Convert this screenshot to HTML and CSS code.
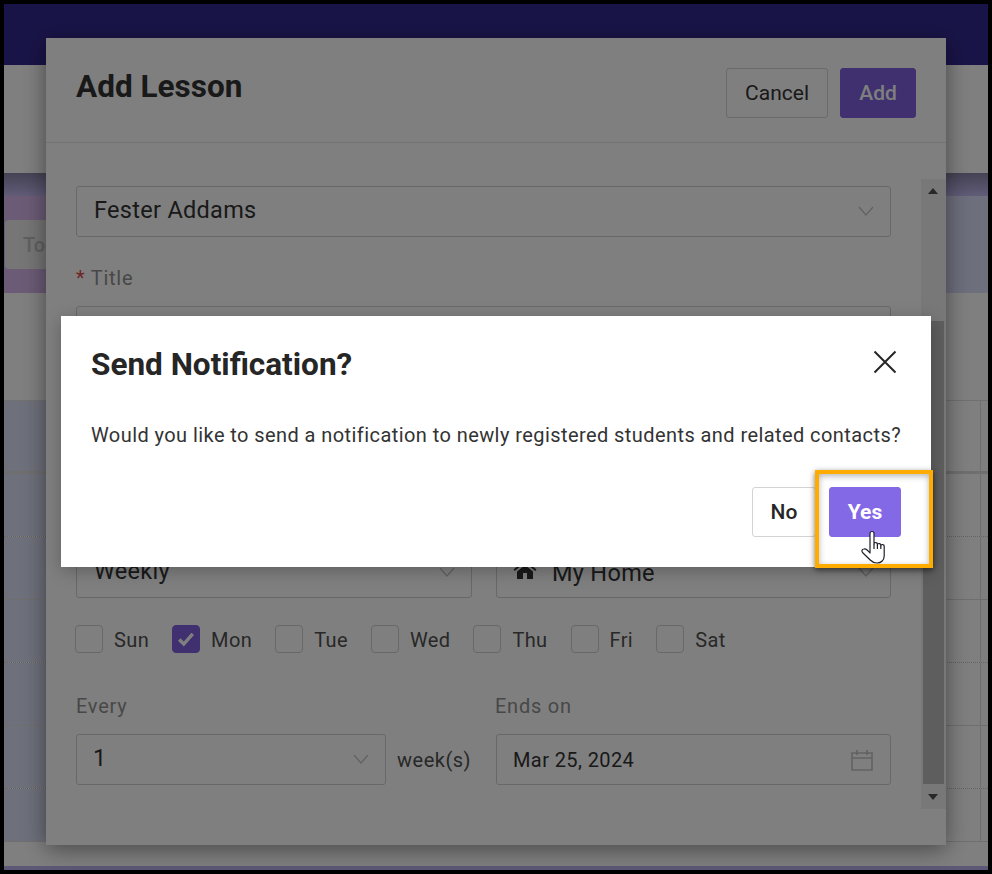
FILE: index.html
```html
<!DOCTYPE html>
<html lang="en">
<head>
<meta charset="utf-8">
<title>Send Notification?</title>
<link rel="stylesheet" href="styles.css">
</head>
<body>
<div class="frame">
  <div class="page">
    <div class="app-header"></div>
    <div class="app-toolbar"></div>
    <div class="band"></div>
    <div class="strip">
      <div class="strip-left"><button class="today">Today</button></div>
    </div>
    <div class="app-gap"></div>
    <div class="cal">
      <div class="cal-row head"><i class="side"></i><i class="main"></i><i class="last"></i></div>
      <div class="cal-row dot"><i class="side"></i><i class="main"></i><i class="last"></i></div>
      <div class="cal-row"><i class="side"></i><i class="main"></i><i class="last"></i></div>
      <div class="cal-row dot"><i class="side"></i><i class="main"></i><i class="last"></i></div>
      <div class="cal-row"><i class="side"></i><i class="main"></i><i class="last"></i></div>
      <div class="cal-row dot"><i class="side"></i><i class="main"></i><i class="last"></i></div>
      <div class="cal-row short"><i class="side"></i><i class="main"></i><i class="last"></i></div>
    </div>
    <div class="app-foot"></div>
    <div class="app-foot-bar"></div>

    <section class="modal">
      <header class="modal-head">
        <h2>Add Lesson</h2>
        <div class="modal-actions">
          <button class="btn">Cancel</button>
          <button class="btn primary">Add</button>
        </div>
      </header>
      <div class="modal-body">
        <div class="field select"><span class="value big raised">Fester Addams</span><svg class="chev" viewBox="0 0 16 10"><path d="M1 1l7 8 7-8"/></svg></div>
        <label class="label first"><span class="req">*</span> Title</label>
        <div class="field"></div>
        <div class="two covered">
          <div class="field select"><span class="value big raised">Weekly</span><svg class="chev" viewBox="0 0 16 10"><path d="M1 1l7 8 7-8"/></svg></div>
          <div class="field select"><svg class="home" viewBox="0 0 24 20"><path d="M12 1L0.5 10.5l1.3 1.5L12 3.6 22.2 12l1.3-1.5-4.3-3.6V2h-3v2.4zM4 12.6V20h6v-6h4v6h6v-7.4L12 6z"/></svg><span class="value big">My Home</span><svg class="chev" viewBox="0 0 16 10"><path d="M1 1l7 8 7-8"/></svg></div>
        </div>
        <div class="days">
          <label class="day"><span class="box"></span>Sun</label>
          <label class="day"><span class="box on"><svg viewBox="0 0 16 14"><path d="M2 7.5l4 4 8-9"/></svg></span>Mon</label>
          <label class="day"><span class="box"></span>Tue</label>
          <label class="day"><span class="box"></span>Wed</label>
          <label class="day"><span class="box"></span>Thu</label>
          <label class="day"><span class="box"></span>Fri</label>
          <label class="day"><span class="box"></span>Sat</label>
        </div>
        <div class="two repeat">
          <div>
            <label class="label">Every</label>
            <div class="every">
              <div class="field select"><span class="value big raised one">1</span><svg class="chev" viewBox="0 0 16 10"><path d="M1 1l7 8 7-8"/></svg></div>
              <span class="unit">week(s)</span>
            </div>
          </div>
          <div>
            <label class="label ends">Ends on</label>
            <div class="field select"><span class="value">Mar 25, 2024</span>
              <svg class="cal-icon" viewBox="0 0 24 24"><path d="M2 5h20v17H2zM2 10h20M7 2v5M17 2v5"/></svg>
            </div>
          </div>
        </div>
      </div>
      <div class="scrollbar">
        <span class="arrow up"></span>
        <span class="thumb"></span>
        <span class="arrow down"></span>
      </div>
    </section>

    <div class="mask"></div>

    <section class="dialog">
      <div class="dialog-head">
        <h2>Send Notification?</h2>
        <svg class="close" viewBox="0 0 24 24"><path d="M1.5 1.5l21 21M22.5 1.5l-21 21"/></svg>
      </div>
      <p>Would you like to send a notification to newly registered students and related contacts?</p>
      <div class="dialog-actions">
        <button class="btn no">No</button>
        <button class="btn yes">Yes</button>
      </div>
      <div class="callout"></div>
      <svg class="cursor" viewBox="0 0 28 34"><path class="hand" d="M10 23V3.5a2 2 0 0 1 4 0V14a1.7 1.7 0 0 1 3.4.5V15a1.7 1.7 0 0 1 3.4.5v.5a1.7 1.7 0 0 1 3.4.5V26c0 4-3 7-7 7-3 0-5-1-7-3L3 23c-2-2-1-4 1-4 2-.5 4 1.500 6 4z"/><path class="hand" d="M14 14v5M17.400 15v4M20.800 16v3"/></svg>
    </section>
  </div>
</div>
</body>
</html>
```
FILE: styles.css
```css
* { box-sizing: border-box; }
html, body { margin: 0; padding: 0; background: #000; }
body { font-family: Roboto, "Liberation Sans", sans-serif; color: #333; }
.frame { width: 992px; height: 874px; padding: 4px; background: #000; overflow: hidden; }
.page { position: relative; width: 984px; height: 866px; background: #fff; overflow: hidden; }

.app-header { height: 61px; background: #332990; }
.app-toolbar { height: 108px; background: #fff; }
.band { height: 23px; background: linear-gradient(#8a86a8, #c2b8f0); }
.strip { height: 97px; background: linear-gradient(90deg, #d9b7ec 0, #c6bbf0 45%, #dde0fb 100%); display: flex; }
.strip-left { padding: 24px 0 0 1px; }
.today { height: 49px; width: 120px; padding: 0 0 0 18px; text-align: left; border: 0; border-radius: 4px; background: #ececec; color: #c0c0c0; font: 500 20px Roboto, sans-serif; }
.app-gap { height: 107px; background: #fff; }

.cal { border-top: 1px solid #e0e0e0; }
.cal-row { height: 63px; display: grid; grid-template-columns: 42px 1fr 34px 1px 7px; border-bottom: 1px solid #dedede; }
.cal-row.head { height: 73px; border-bottom-width: 3px; }
.cal-row.dot { border-bottom: 1px dotted #c8c8c8; }
.cal-row.short { height: 53px; }
.side { background: #dce1f7; grid-column: 1; }
.main { grid-column: 2 / 3; }
.last { grid-column: 4; background: #dedede; }
.app-foot { height: 24px; background: #fff; }
.app-foot-bar { height: 5px; background: #b9b0ea; }

.modal { position: absolute; left: 42px; top: 34px; width: 900px; height: 807px; background: #fff; box-shadow: 0 4px 22px rgba(0,0,0,.45); }
.modal-head { height: 105px; display: flex; justify-content: space-between; align-items: flex-start; padding: 30px 30px 0; border-bottom: 1px solid #e6e6e6; }
.modal-head h2 { margin: 1px 0 0; font-size: 31.500px; line-height: 36px; font-weight: 700; color: #333; }
.modal-actions { display: flex; gap: 12px; }
.btn { height: 50px; padding: 0 18px; border: 1px solid #d4d4d4; border-radius: 3px; background: #fff; color: #333; font: 400 21px Roboto, sans-serif; }
.btn.primary { width: 76px; background: #8060de; border-color: #8060de; color: #fff; font-weight: 500; }
.modal-body { padding: 43px 55px 0 30px; }
.field { height: 51px; border: 1px solid #d0d0d0; border-radius: 3px; display: flex; align-items: center; padding: 0 16px; position: relative; background: #fff; }
.value { font-size: 20px; letter-spacing: .4px; color: #333; }
.value.big { font-size: 23.500px; letter-spacing: .3px; }
.value.raised { margin-bottom: 4px; margin-left: 1px; }
.value.one { margin-left: 0; }
.chev { position: absolute; right: 16px; top: 19px; width: 16px; height: 10px; fill: none; stroke: #c4c4c4; stroke-width: 1.300; }
.label { display: block; height: 25px; line-height: 25px; margin-bottom: 16px; font-size: 20px; letter-spacing: .75px; color: #909090; }
.label.first { margin-top: 29px; margin-bottom: 15px; }
.label.ends { margin-left: -1px; }
.req { color: #e04a4a; }
.two { display: grid; grid-template-columns: 396px 395px; column-gap: 24px; }
.covered { margin-top: 190px; }
.home { width: 24px; height: 20px; margin-right: 15px; fill: #333; margin-top: -8px; }
.days { display: flex; gap: 23px; margin: 27px 0 0 -1px; }
.day { display: flex; align-items: center; gap: 11px; height: 28px; padding-top: 2px; font-size: 20px; letter-spacing: .38px; color: #505050; }
.box { width: 28px; height: 28px; margin-top: -2px; border: 1px solid #d0d0d0; border-radius: 4px; display: flex; align-items: center; justify-content: center; background: #fff; }
.box.on { background: #8060de; border-color: #8060de; }
.box svg { width: 18px; height: 16px; fill: none; stroke: #fff; stroke-width: 3; }
.repeat { margin-top: 40px; }
.repeat .label { padding-top: 1px; }
.every { display: flex; align-items: center; gap: 11px; }
.every .field { width: 310px; flex: none; }
.unit { font-size: 20px; letter-spacing: .5px; color: #505050; }
.cal-icon { position: absolute; right: 16px; top: 13px; width: 24px; height: 24px; fill: none; stroke: #c4c4c4; stroke-width: 1.600; }

.scrollbar { position: absolute; left: 875px; top: 141px; width: 25px; height: 630px; background: #f1f1f1; }
.thumb { position: absolute; left: 2px; top: 142px; width: 21px; height: 463px; background: #bcbcbc; }
.arrow { position: absolute; left: 7px; width: 0; height: 0; border-left: 5.500px solid transparent; border-right: 5.500px solid transparent; }
.arrow.up { top: 9px; border-bottom: 6px solid #505050; }
.arrow.down { bottom: 9px; border-top: 6px solid #505050; }

.mask { position: absolute; inset: 0; background: rgba(0,0,0,.5); }

.dialog { position: absolute; left: 57px; top: 312px; width: 870px; height: 251px; background: #fff; padding: 30px; box-shadow: 0 4px 16px rgba(0,0,0,.25); }
.dialog-head { display: flex; justify-content: space-between; align-items: center; height: 36px; }
.dialog-head h2 { margin: 1px 0 0; font-size: 31.500px; line-height: 36px; font-weight: 700; color: #262626; }
.close { width: 24px; height: 24px; margin: -4px 4px 0 0; fill: none; stroke: #262626; stroke-width: 2; }
.dialog p { margin: 41px 0 0; font-size: 20px; line-height: 24px; letter-spacing: .425px; color: #333; white-space: nowrap; }
.dialog-actions { display: flex; justify-content: flex-end; gap: 13px; margin-top: 40px; }
.btn.no { width: 64px; padding: 0; color: #262626; font-weight: 500; }
.btn.yes { width: 72px; padding: 0; background: #8469e6; border-color: #8469e6; color: #fff; font-weight: 700; }
.callout { position: absolute; left: 754px; top: 154px; width: 118px; height: 98px; border: 4px solid #ffab00; box-shadow: 0 2px 6px rgba(0,0,0,.55), inset 0 2px 6px rgba(0,0,0,.3); }
.cursor { position: absolute; left: 799px; top: 214px; width: 28px; height: 34px; }
.hand { fill: #fff; stroke: #1f1f2b; stroke-width: 1.200; stroke-linejoin: round; }
```
